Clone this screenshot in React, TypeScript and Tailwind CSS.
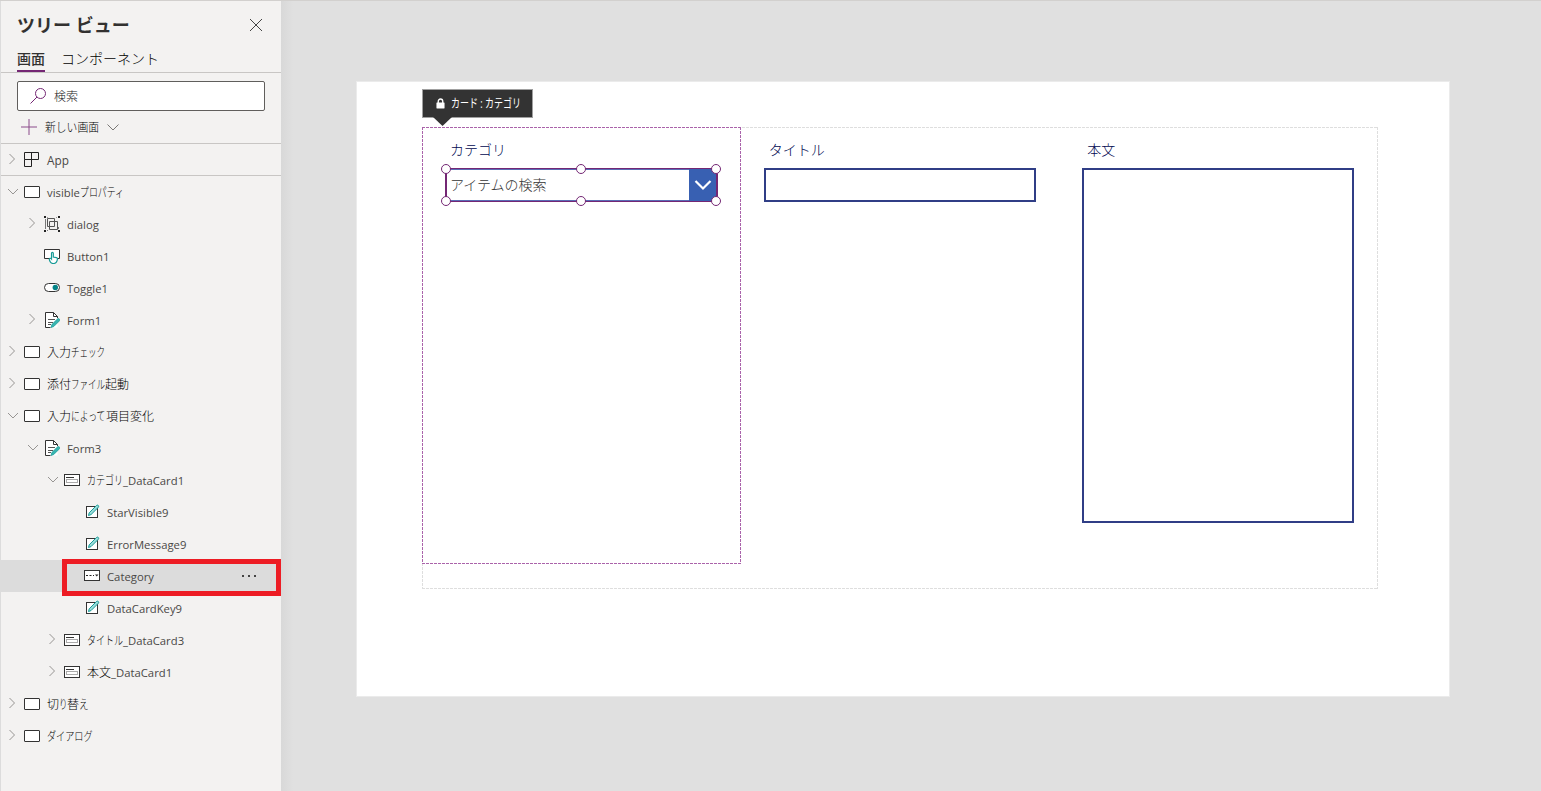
import React from 'react';
import clsx from 'clsx';

type IconName = 'app' | 'screen' | 'group' | 'button' | 'toggle' | 'form' | 'card' | 'edit' | 'combo';

interface TreeItem {
  icon: IconName;
  level: number;
  // text runs; kana runs are condensed to a fixed width
  runs: { text: string; className?: string }[];
  state?: 'open' | 'closed';
  selected?: boolean;
}

const items: TreeItem[] = [
  { icon: 'screen', level: 0, state: 'open', runs: [{ text: 'visible' }, { text: 'プロパティ', className: 'w-[42px] scale-x-[0.74]' }] },
  { icon: 'group', level: 1, state: 'closed', runs: [{ text: 'dialog' }] },
  { icon: 'button', level: 1, runs: [{ text: 'Button1' }] },
  { icon: 'toggle', level: 1, runs: [{ text: 'Toggle1' }] },
  { icon: 'form', level: 1, state: 'closed', runs: [{ text: 'Form1' }] },
  { icon: 'screen', level: 0, state: 'closed', runs: [{ text: '入力' }, { text: 'チェック', className: 'w-[34px] scale-x-[0.71]' }] },
  { icon: 'screen', level: 0, state: 'closed', runs: [{ text: '添付' }, { text: 'ファイル', className: 'w-[34px] scale-x-[0.71]' }, { text: '起動' }] },
  { icon: 'screen', level: 0, state: 'open', runs: [{ text: '入力' }, { text: 'によって', className: 'w-[35px] scale-x-[0.73]' }, { text: '項目変化' }] },
  { icon: 'form', level: 1, state: 'open', runs: [{ text: 'Form3' }] },
  { icon: 'card', level: 2, state: 'open', runs: [{ text: 'カテゴリ', className: 'w-[36px] scale-x-[0.75]' }, { text: '_DataCard1' }] },
  { icon: 'edit', level: 3, runs: [{ text: 'StarVisible9' }] },
  { icon: 'edit', level: 3, runs: [{ text: 'ErrorMessage9' }] },
  { icon: 'combo', level: 3, selected: true, runs: [{ text: 'Category' }] },
  { icon: 'edit', level: 3, runs: [{ text: 'DataCardKey9' }] },
  { icon: 'card', level: 2, state: 'closed', runs: [{ text: 'タイトル', className: 'w-[36px] scale-x-[0.75]' }, { text: '_DataCard3' }] },
  { icon: 'card', level: 2, state: 'closed', runs: [{ text: '本文' }, { text: '_DataCard1' }] },
  { icon: 'screen', level: 0, state: 'closed', runs: [{ text: '切' }, { text: 'り', className: 'w-[8px] scale-x-[0.7]' }, { text: '替' }, { text: 'え', className: 'w-[10px] scale-x-[0.8]' }] },
  { icon: 'screen', level: 0, state: 'closed', runs: [{ text: 'ダイアログ', className: 'w-[46px] scale-x-[0.76]' }] },
];

const indents = ['pl-[6px]', 'pl-[26px]', 'pl-[46px]', 'pl-[66px]'];

const icons: Record<IconName, React.ReactNode> = {
  app: <path d="M.5.5h14v7H.5zM.5 7.5v7h7V.5" stroke="#222" />,
  screen: <rect x="0.5" y="2.5" width="15" height="11" rx="0.4" fill="#fff" stroke="#333" />,
  group: (
    <>
      <path d="M1.5 3v10M3 14.5h1M14.5 13v-2" stroke="#777" />
      <path d="M3 1.5h1M12 1.5h1" stroke="#999" />
      <path d="M3.5 2.5h7v8h-7zM5.5 5.5h8v8h-8z" stroke="#555" />
      <path d="M0 0h2v2H0zM14 0h2v2h-2zM0 14h2v2H0zM14 14h2v2h-2z" fill="#222" />
    </>
  ),
  button: (
    <>
      <path d="M6 10.5H.5v-9h15v9H13" fill="#fff" stroke="#333" />
      <path d="M7.5 10V5.3c0-1.3 1.8-1.3 1.8 0V9l3 .6c1 .2 1.3.8 1.1 1.7-.3 2.7-1.4 4.2-4.1 4.2-2.3 0-3.5-1.6-4-4.1-.2-1.2 1.3-1.6 2.2-.4z" fill="#fff" stroke="#159a96" strokeWidth="1.2" />
    </>
  ),
  toggle: (
    <>
      <rect x="0.5" y="3.5" width="15" height="8" rx="4" fill="#fff" stroke="#333" />
      <circle cx="11.3" cy="7.5" r="2.7" fill="#038387" />
    </>
  ),
  form: (
    <>
      <path d="M1.5.5h8l4 4v11h-12z" fill="#fff" />
      <path d="M13.5 6V4.5l-4-4h-8v15h5M9.5.5v4h4" stroke="#333" />
      <path d="M4 7.5h7M4 10.5h5M4 12.5h3" stroke="#555" />
      <path d="m7 15.5.8-3 5.8-5.7c1-1 3 .8 2 1.9l-5.8 5.8z" fill="#39b5b0" stroke="#159a96" strokeWidth=".7" />
    </>
  ),
  card: (
    <>
      <rect x="0.5" y="2.5" width="15" height="11" fill="#fff" stroke="#333" />
      <path d="M2 5.5h8" stroke="#333" />
      <rect x="2.5" y="7.5" width="11" height="3" stroke="#aaa" />
    </>
  ),
  edit: (
    <>
      <rect x="2.5" y="2.5" width="11" height="11" fill="#fff" stroke="#333" />
      <path d="m4.5 11.5.7-2.7 7.3-7.3c1.2-1.2 3 .6 1.8 1.8L7 10.6z" fill="#9adcda" stroke="#159a96" />
    </>
  ),
  combo: (
    <>
      <rect x="0.5" y="2.5" width="15" height="10" fill="#fff" stroke="#333" />
      <path d="M2 7.5h2M5.5 7.5h2M9 7.5h1" stroke="#222" />
      <path d="M11 6.5h3.5l-1.75 2z" fill="#222" />
    </>
  ),
};

const Icon = ({ name }: { name: IconName }) => (
  <svg className="size-4 shrink-0" viewBox="0 0 16 16" fill="none">
    {icons[name]}
  </svg>
);

const Arrow = ({ state }: { state?: 'open' | 'closed' }) => (
  <svg className="mr-[5px] h-3 w-3 shrink-0 -translate-y-px" viewBox="0 0 12 12" fill="none" stroke="#979593">
    {state === 'open' && <path d="m1 4 5 5 5-5" />}
    {state === 'closed' && <path d="m2.5 1 5 5-5 5" />}
  </svg>
);

const TreeRow = ({ item }: { item: TreeItem }) => (
  <div className={clsx('relative flex h-8 items-center', indents[item.level], item.selected && 'bg-[#dcdcdc]')}>
    <Arrow state={item.state} />
    <Icon name={item.icon} />
    <div className="ml-[7px] flex h-4 items-center text-[11.3px] leading-4 whitespace-nowrap text-[#4a4846]">
      {item.runs.map((run) => (
        <span
          key={run.text}
          className={clsx(
            'translate-y-px',
            !/[a-zA-Z]/.test(run.text) && 'text-[12px] font-light text-black',
            run.className && ['inline-block origin-left', run.className]
          )}
        >
          {run.text}
        </span>
      ))}
    </div>
    {item.selected && (
      <>
        <svg className="mr-6 ml-auto h-1 w-4" viewBox="0 0 16 4" fill="#444">
          <path d="M1 1h2v2H1zM7 1h2v2H7zM13 1h2v2h-2z" />
        </svg>
        <div className="absolute top-[-1px] right-0 h-[37px] w-[219px] border-[5px] border-[#ed1c24]" />
      </>
    )}
  </div>
);

const TreePanel = () => (
  <aside className="flex w-[281px] shrink-0 flex-col border-l border-[#dcdcdc] bg-[#f3f2f1] text-[#323130]">
    <header className="flex h-[47px] items-center justify-between pt-[3px] pr-[18px] pl-4">
      <h1 className="text-[18px] font-semibold whitespace-nowrap">ツリー ビュー</h1>
      <svg className="size-[14px]" viewBox="0 0 14 14" stroke="#444" fill="none">
        <path d="m1 1 12 12M13 1 1 13" />
      </svg>
    </header>
    <nav className="flex h-[26px] gap-4 border-b border-[#c8c6c4] pl-4 text-[14px] leading-6">
      <span className="h-[25px] border-b-2 border-[#742774] font-medium">画面</span>
      <span className="font-light text-black">コンポーネント</span>
    </nav>
    <div className="mt-2 mr-4 ml-4 flex h-[30px] items-center rounded-[2px] border border-[#605e5c] bg-white pl-3 text-[12px] font-light text-[#222]">
      <svg className="mr-2 size-4" viewBox="0 0 16 16" stroke="#742774" fill="none">
        <circle cx="10.5" cy="5.5" r="5" />
        <path d="M7 9 .5 15.5" />
      </svg>
      <span className="translate-y-px">検索</span>
    </div>
    <div className="flex h-[33px] items-center border-b border-[#c8c6c4] pl-5 text-[12px]">
      <svg className="mr-2 size-4" viewBox="0 0 16 16" stroke="#8a4a8a" fill="none">
        <path d="M8 0v16M0 8h16" />
      </svg>
      <span className="w-[62px] origin-left translate-y-px scale-x-[0.9] font-light whitespace-nowrap text-black">新しい画面</span>
      <svg className="h-3 w-3" viewBox="0 0 12 12" fill="none" stroke="#797775">
        <path d="m.5 3.5 5.5 5.5 5.5-5.5" />
      </svg>
    </div>
    <div className="flex h-8 items-center border-b border-[#c8c6c4] pl-[6px]">
      <Arrow state="closed" />
      <Icon name="app" />
      <span className="ml-[7px] translate-y-px text-[11.8px] text-[#4a4846]">App</span>
    </div>
    {items.map((item, i) => (
      <TreeRow key={i} item={item} />
    ))}
  </aside>
);

// dashed outline with a 4px pitch, drawn in the current text colour
const DashedFrame = ({ className }: { className: string }) => (
  <div className={clsx('pointer-events-none absolute', className)}>
    <i className="absolute inset-x-0 top-0 h-px bg-[repeating-linear-gradient(90deg,currentColor_0_3px,transparent_3px_4px)]" />
    <i className="absolute inset-x-0 bottom-0 h-px bg-[repeating-linear-gradient(90deg,currentColor_0_3px,transparent_3px_4px)]" />
    <i className="absolute inset-y-0 left-0 w-px bg-[repeating-linear-gradient(180deg,currentColor_0_3px,transparent_3px_4px)]" />
    <i className="absolute inset-y-0 right-0 w-px bg-[repeating-linear-gradient(180deg,currentColor_0_3px,transparent_3px_4px)]" />
  </div>
);

const handles = [
  'left-[-6px] top-[-5px]',
  'left-[129px] top-[-5px]',
  'left-[264px] top-[-5px]',
  'left-[-6px] top-[27px]',
  'left-[129px] top-[27px]',
  'left-[264px] top-[27px]',
];

const Field = ({ label, children }: { label: string; children: React.ReactNode }) => (
  <div className="pt-[13px] pl-[23px]">
    <div className="h-7 pl-[5px] text-[14px] leading-5 font-light text-[#00074f]">{label}</div>
    {children}
  </div>
);

const Canvas = () => (
  <main className="flex-1 bg-[#e0e0e0]">
    <div className="h-full w-3 bg-linear-to-r from-[#d8d8d8] to-[#e0e0e0]" />
    <div className="absolute top-[81px] left-[356px] h-[616px] w-[1094px] border border-[#ebebeb] bg-white pt-[45px] pl-[65px]">
      <section className="relative grid h-[462px] w-[956px] grid-cols-3">
        <DashedFrame className="inset-0 text-[#dedede]" />
        <Field label="カテゴリ">
          <div className="relative flex h-[34px] w-[273px] border-x-2 border-y border-[#742774] bg-white">
            <span className="flex-1 border-y border-[#5a6bb5] pl-[3px] text-[14px] leading-[29px] font-light text-[#333]">アイテムの検索</span>
            <span className="flex w-[27px] items-center justify-center bg-[#3860b2]">
              <svg className="h-4 w-[18px]" viewBox="0 0 18 16" fill="none" stroke="#fff" strokeWidth="2.2">
                <path d="m1.5 4 7.5 7.5L16.5 4" />
              </svg>
            </span>
            {handles.map((pos) => (
              <i key={pos} className={clsx('absolute size-[10px] rounded-full border border-[#742774] bg-white', pos)} />
            ))}
          </div>
        </Field>
        <Field label="タイトル">
          <div className="h-[34px] w-[272px] border-2 border-[#303e86]" />
        </Field>
        <Field label="本文">
          <div className="h-[355px] w-[272px] border-2 border-[#303e86]" />
        </Field>
        <DashedFrame className="top-0 left-0 h-[437px] w-[319px] text-[#aa63aa]" />
        <div className="absolute top-[-38px] left-0 flex h-[29px] w-[111px] items-center border border-[#a0a0a0] bg-[#333] pl-[13px] text-[12px] text-white">
          <svg className="mr-[6px] h-[11px] w-[9px] shrink-0" viewBox="0 0 10 12" fill="none">
            <path d="M2.5 6V3.5a2.5 2.5 0 0 1 5 0V6" stroke="#fff" strokeWidth="1.5" />
            <rect x="0.5" y="5" width="9" height="6.5" rx=".5" fill="#fff" />
          </svg>
          <span className="origin-left scale-x-[0.75] whitespace-nowrap">カード : カテゴリ</span>
          <svg className="absolute top-[27px] left-[10px] h-[9px] w-[19px]" viewBox="0 0 19 9" fill="#333">
            <path d="M0 0h19L9.5 9z" />
          </svg>
        </div>
      </section>
    </div>
  </main>
);

export default function App() {
  return (
    <div className="relative flex h-[791px] w-[1541px] overflow-hidden font-['Open_Sans','Noto_Sans_CJK_JP',sans-serif]">
      <TreePanel />
      <Canvas />
      <div className="absolute inset-x-0 top-0 h-px bg-[#d2d0ce]" />
    </div>
  );
}
